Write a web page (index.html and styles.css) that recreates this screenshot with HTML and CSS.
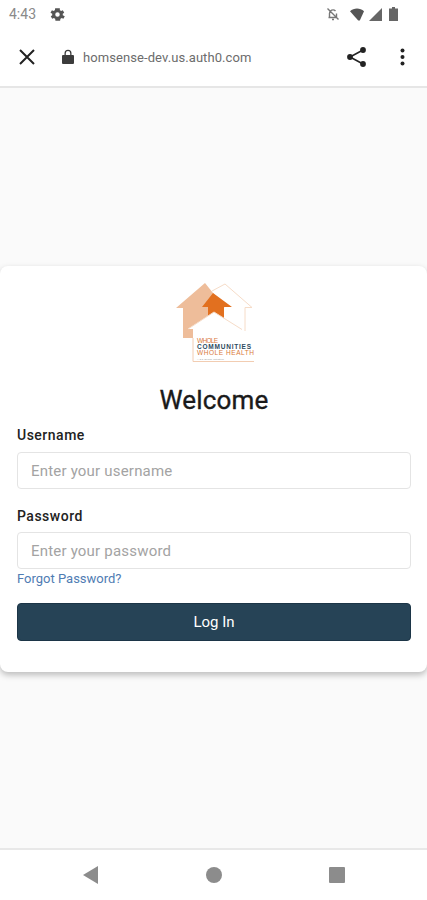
FILE: index.html
```html
<!DOCTYPE html>
<html lang="en">
<head>
<meta charset="utf-8">
<title>Welcome</title>
<link rel="stylesheet" href="styles.css">
</head>
<body>
<div class="phone">
  <header class="status">
    <div class="status-left">
      <span class="time">4:43</span>
      <svg class="gear" width="17" height="17" viewBox="0 0 24 24"><path fill="#555" fill-rule="evenodd" d="M19.400 13a7.500 7.500 0 0 0 0-2l2.100-1.600-2-3.500-2.500 1a7.500 7.500 0 0 0-1.700-1L15.300 3.200h-6.600l-.4 2.700a7.500 7.500 0 0 0-1.700 1l-2.500-1-2 3.500L4.600 11a7.500 7.500 0 0 0 0 2l-2.100 1.600 2 3.500 2.500-1a7.500 7.500 0 0 0 1.700 1l.4 2.700h6.600l.4-2.700a7.500 7.500 0 0 0 1.700-1l2.500 1 2-3.500zM12 15.200a3.200 3.200 0 1 1 0-6.400 3.200 3.200 0 0 1 0 6.400z"/></svg>
    </div>
    <div class="status-right">
      <svg class="bell" width="14" height="14" viewBox="0 0 14 14"><path fill="none" stroke="#777" stroke-width="1.400" d="M3.500 10.500V6.500a3.500 3.500 0 0 1 6-2.500M10.500 6.500v4M2.500 10.500h8.500M6 12.500h2M1.500 1.500l11 11"/></svg>
      <svg width="15" height="13" viewBox="0 0 15 13"><path fill="#555" d="M0 3.200C3.800-.4 10.200-.4 14 3.200L9.800 12.500H8.200z"/></svg>
      <svg width="13" height="13" viewBox="0 0 13 13"><path fill="#666" d="M13 0v13H0z"/></svg>
      <svg class="battery" width="9" height="14" viewBox="0 0 9 14"><path fill="#666" d="M3 0h3v1.500h3V14H0V1.500h3z"/></svg>
    </div>
  </header>
  <nav class="toolbar">
    <svg class="close" width="18" height="18" viewBox="0 0 18 18"><path fill="none" stroke="#222" stroke-width="2" d="M2 2l14 14M16 2L2 16"/></svg>
    <svg class="lock" width="12" height="16" viewBox="0 0 12 16"><path fill="#3c3c3c" d="M1 6h1.500V4.200a3.500 3.500 0 0 1 7 0V6H11a1 1 0 0 1 1 1v7a1 1 0 0 1-1 1H1a1 1 0 0 1-1-1V7a1 1 0 0 1 1-1zm2.800 0h4.400V4.200a2.200 2.200 0 0 0-4.400 0z"/></svg>
    <span class="url">homsense-dev.us.auth0.com</span>
    <svg class="share" width="22" height="22" viewBox="0 0 22 22"><path fill="none" stroke="#222" stroke-width="1.600" d="M17 4L4 11l13 7"/><circle cx="17" cy="4" r="2.900" fill="#222"/><circle cx="4" cy="11" r="2.900" fill="#222"/><circle cx="17" cy="18" r="2.900" fill="#222"/></svg>
    <svg class="more" width="5" height="18" viewBox="0 0 5 18"><circle cx="2.500" cy="2.500" r="2" fill="#222"/><circle cx="2.500" cy="9" r="2" fill="#222"/><circle cx="2.500" cy="15.500" r="2" fill="#222"/></svg>
  </nav>
  <main class="content">
    <section class="card">
      <svg class="logo" width="84" height="84" viewBox="172 280 84 84">
        <path fill="none" stroke="#f6dcc8" stroke-width="1" d="M212 291L225 284 252 307.500H245V331"/>
        <path fill="#eebd9a" d="M205 283L176 308H183V338H193V329H188L214 312 225 307 213 293z"/>
        <path fill="#e2701f" d="M213 293L232 307H224V322H208V307H202z"/>
        <path fill="#fff" d="M188 329L214 312 242 329.500H237V349H193V329z"/>
        <path fill="none" stroke="#f6dcc8" stroke-width="1" d="M188 329L214 312 242 329.500"/>
        <path fill="none" stroke="#f2cdb2" stroke-width="1" d="M193 338V361.500H254"/>
        <text class="lg lg-o" x="197" y="343" textLength="21">WHOLE</text>
        <text class="lg lg-b" x="197" y="348.500" textLength="54">COMMUNITIES</text>
        <text class="lg lg-o" x="197" y="355" textLength="57">WHOLE HEALTH</text>
        <text class="lg-t" x="197" y="359.500" textLength="27">A CT Group Initiative</text>
      </svg>
      <h1 class="title">Welcome</h1>
      <form class="form">
        <label class="label" for="user">Username</label>
        <input class="input" id="user" type="text" placeholder="Enter your username">
        <label class="label label-pass" for="pass">Password</label>
        <input class="input" id="pass" type="password" placeholder="Enter your password">
        <a class="forgot" href="#">Forgot Password?</a>
        <button class="login" type="button">Log In</button>
      </form>
    </section>
  </main>
  <footer class="navbar">
    <svg class="back" width="15" height="18" viewBox="0 0 15 18"><path fill="#8c8c8c" d="M15 0v18L0 9z"/></svg>
    <svg width="16" height="16" viewBox="0 0 16 16"><circle cx="8" cy="8" r="8" fill="#8c8c8c"/></svg>
    <svg width="16" height="16" viewBox="0 0 16 16"><rect width="16" height="16" rx="1" fill="#8c8c8c"/></svg>
  </footer>
</div>
</body>
</html>
```

FILE: styles.css
```css
* { box-sizing: border-box; }
html, body { margin: 0; padding: 0; }
body { font-family: Roboto, "Liberation Sans", sans-serif; background: #fff; color: #1a1a1a; }
.phone { width: 427px; height: 900px; display: flex; flex-direction: column; overflow: hidden; }
.status { height: 28px; flex: none; display: flex; align-items: center; justify-content: space-between; padding: 0 29px 0 9px; }
.status-left { display: flex; align-items: center; gap: 13px; }
.time { font-size: 14px; color: #8a8a8a; }
.status-right { display: flex; align-items: center; gap: 4px; }
.bell { margin-right: 6px; }
.battery { margin-left: 3px; }
.toolbar { height: 60px; flex: none; display: flex; align-items: center; padding: 0 22px 0 18px; border-bottom: 2px solid #e6e6e6; }
.lock { margin-left: 26px; }
.url { margin-left: 9px; font-size: 13px; letter-spacing: .08px; color: #6c6c6c; flex: 1; }
.more { margin-left: 32px; }
.content { flex: 1; background: #fafafa; padding-top: 178px; }
.card { height: 406px; background: #fff; border-radius: 8px; box-shadow: 0 3px 6px rgba(0, 0, 0, .25); padding: 14px 16px 0 17px; display: flex; flex-direction: column; align-items: center; }
.logo { flex: none; }
.lg { font-family: "Liberation Sans", sans-serif; font-size: 6.500px; }
.lg-o { fill: #d9793a; }
.lg-b { fill: #2c4a5e; font-weight: 700; }
.lg-t { font-family: "Liberation Sans", sans-serif; font-size: 2.500px; fill: #888; }
.title { margin: 20px 0 0; font-size: 26px; line-height: 32px; font-weight: 400; letter-spacing: .2px; -webkit-text-stroke: .35px #1a1a1a; color: #1a1a1a; }
.form { width: 100%; display: flex; flex-direction: column; margin-top: 11px; }
.label { font-size: 14px; line-height: 17px; font-weight: 500; letter-spacing: .5px; color: #222; }
.label-pass { margin-top: 19px; line-height: 16px; }
.input { height: 37px; margin-top: 8px; padding: 0 13px; border: 1px solid #e4e4e4; border-radius: 4px; background: #fff; font-family: inherit; font-size: 15px; letter-spacing: .2px; outline: none; }
.input::placeholder { color: #a3a3a3; opacity: 1; }
.forgot { margin-top: 1px; font-size: 13px; line-height: 17px; color: #4f7cb3; text-decoration: none; }
.login { height: 38px; margin-top: 16px; border: 1px solid #1c3547; border-radius: 4px; background: #264356; color: #fff; font-family: inherit; font-size: 15px; font-weight: 400; }
.navbar { height: 52px; flex: none; display: flex; align-items: center; justify-content: center; gap: 107px; border-top: 2px solid #e8e8e8; background: #fff; padding-bottom: 1px; }
.back { margin-right: 1px; }
```
